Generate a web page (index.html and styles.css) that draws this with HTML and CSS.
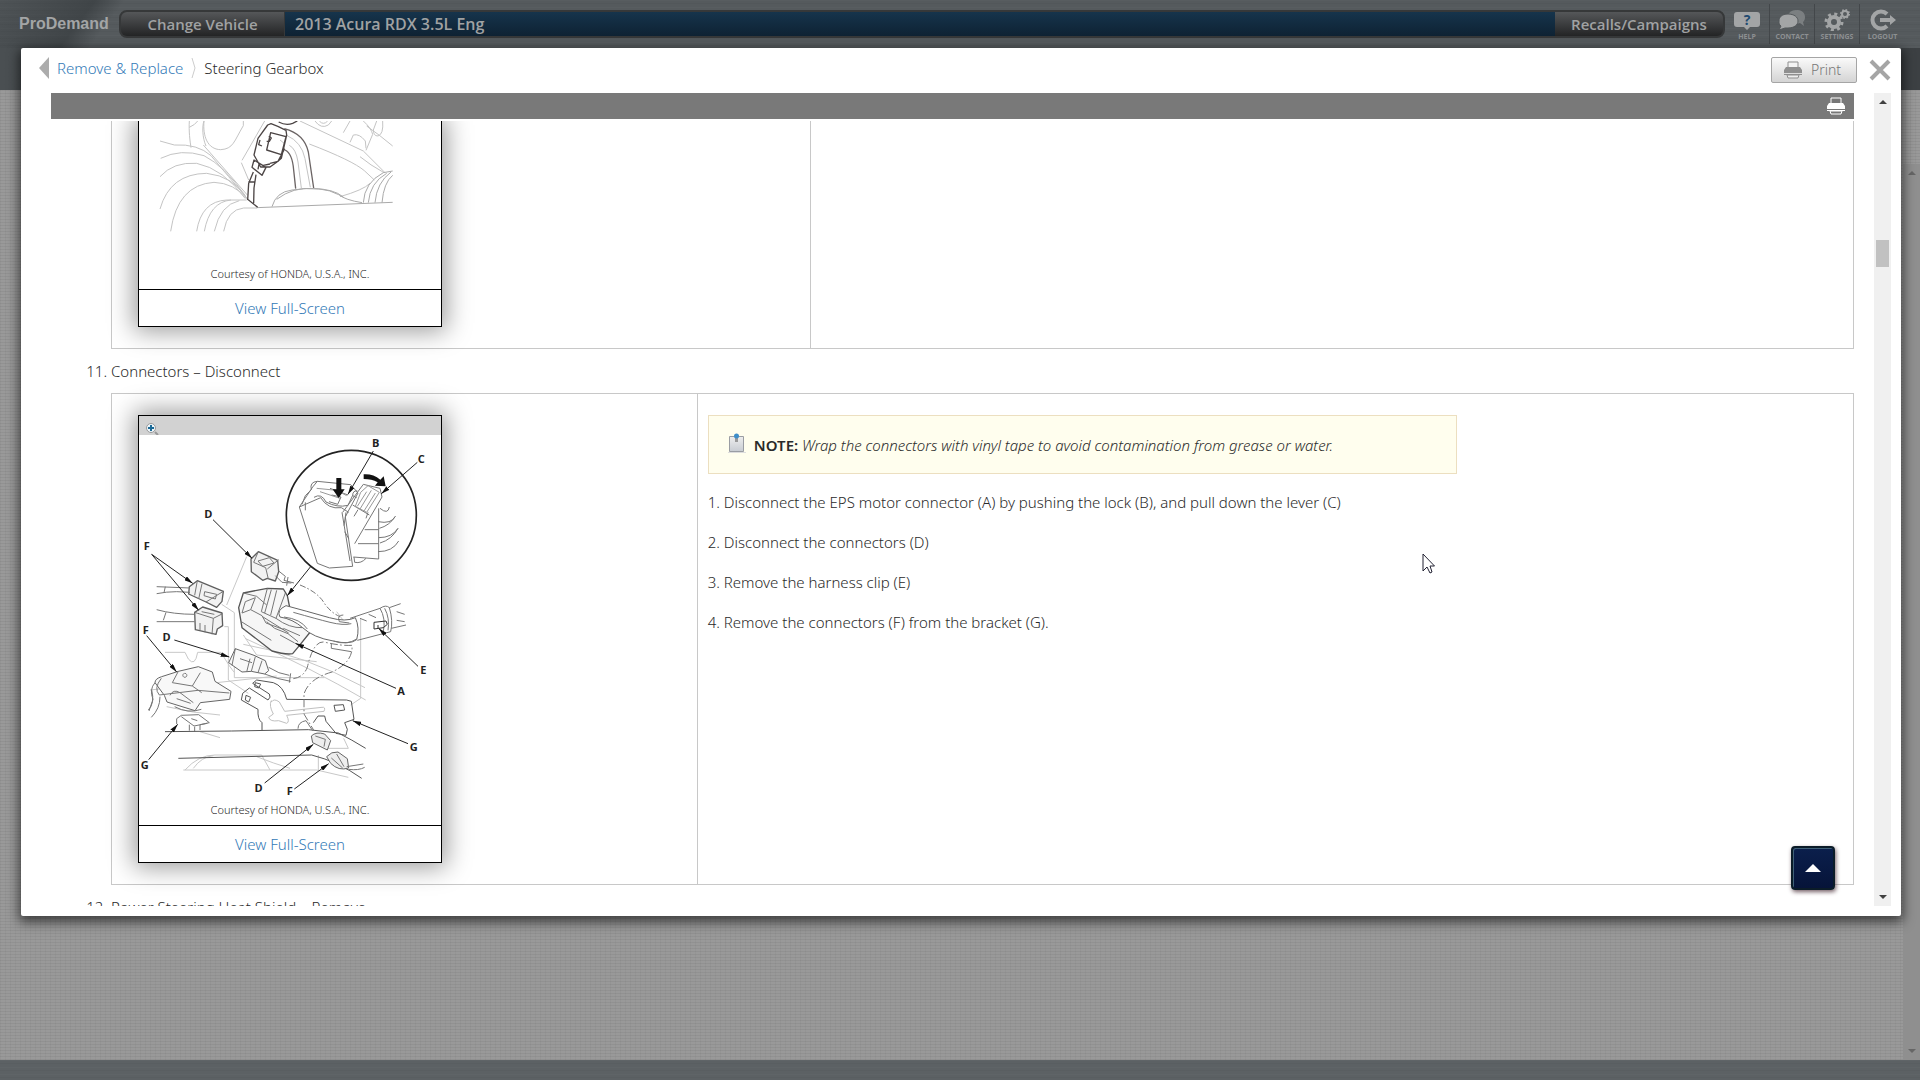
FILE: index.html
```html
<!DOCTYPE html>
<html lang="en">
<head>
<meta charset="utf-8">
<title>ProDemand - Steering Gearbox</title>
<link rel="stylesheet" href="styles.css">
</head>
<body>
<div class="app">
  <header class="topbar">
    <div class="logo">ProDemand</div>
    <div class="vehicle-bar">
      <button class="pill pill-left" type="button">Change Vehicle</button>
      <div class="vehicle">2013 Acura RDX 3.5L Eng</div>
      <button class="pill pill-right" type="button">Recalls/Campaigns</button>
    </div>
    <nav class="tools">
      <a class="tool" href="#help">
        <svg width="28" height="22" viewBox="0 0 28 22"><path d="M4 3h20q3 0 3 3v9q0 3-3 3h-7l-3 3-3-3H4q-3 0-3-3V6q0-3 3-3z" fill="#a3a5a6"/><text x="14" y="16" text-anchor="middle" class="help-mark">?</text></svg>
        <span>HELP</span>
      </a>
      <a class="tool" href="#contact">
        <svg width="28" height="22" viewBox="0 0 28 22"><path d="M19 1c5 0 8 3 8 7 0 3-1 4-2 5l1 4-4-3-4 1z" fill="#7b7f81"/><ellipse cx="18" cy="7" rx="8" ry="6" fill="#7b7f81"/><path d="M10 5c6 0 10 3 10 7s-4 7-10 7l-3 0-6 2 2-4c-2-1-2-3-2-5 0-4 3-7 9-7z" fill="#a3a5a6" stroke="#53585b"/></svg>
        <span>CONTACT</span>
      </a>
      <a class="tool" href="#settings">
        <svg width="28" height="22" viewBox="0 0 28 22" fill="none" stroke="#a3a5a6"><circle cx="11" cy="13" r="5" stroke-width="4"/><circle cx="11" cy="13" r="8" stroke-width="3" stroke-dasharray="3 3.28"/><circle cx="22" cy="5" r="3" stroke-width="2"/><circle cx="22" cy="5" r="4" stroke-width="2" stroke-dasharray="1.5 1.64"/></svg>
        <span>SETTINGS</span>
      </a>
      <a class="tool" href="#logout">
        <svg width="28" height="22" viewBox="0 0 28 22"><path d="M18 5a8.500 8.500 0 1 0 0 12" fill="none" stroke="#a3a5a6" stroke-width="4"/><path d="M11 9h10V6l6 5-6 5v-3H11z" fill="#a3a5a6"/></svg>
        <span>LOGOUT</span>
      </a>
    </nav>
  </header>
  <div class="subbar"></div>
  <main class="desk">
    <div class="page-scroll"><i class="arrow-up"></i><i class="arrow-down"></i></div>
  </main>
  <footer class="bottombar"></footer>
</div>

<section class="dialog" aria-label="Steering Gearbox">
  <header class="dialog-head">
    <nav class="crumbs">
      <button class="back" type="button" aria-label="Back"><svg width="10" height="22" viewBox="0 0 10 22"><path d="M10 0v22L0 11z" fill="#acacac"/></svg></button>
      <a href="#remove">Remove &amp; Replace</a>
      <svg width="5" height="20" viewBox="0 0 5 20"><path d="M1 0l3 10-3 10" fill="none" stroke="#ccc"/></svg>
      <span>Steering Gearbox</span>
    </nav>
    <button class="print" type="button">
      <svg width="20" height="18" viewBox="0 0 20 18"><path d="M5 7V1h10v6" fill="#f3f3f3" stroke="#8f8f8f"/><path d="M3 6h14l2 3v5H1V9z" fill="#8f8f8f"/><path d="M1 12.500h18" stroke="#ddd"/><path d="M4 14h12l-1 3H5z" fill="#eee" stroke="#8f8f8f"/></svg>
      <span>Print</span>
    </button>
    <button class="close" type="button" aria-label="Close"><svg width="22" height="22" viewBox="0 0 22 22"><path d="M2 2l18 18M20 2L2 20" stroke="#a5a5a5" stroke-width="4"/></svg></button>
  </header>
  <div class="dialog-body">
    <div class="article">
      <div class="article-bar">
        <button type="button" aria-label="Print article"><svg width="20" height="18" viewBox="0 0 20 18"><path d="M5 7V1h10v6" fill="#777" stroke="#fff"/><path d="M3 6h14l2 3v5H1V9z" fill="#fff"/><path d="M1 12.500h18" stroke="#777"/><path d="M4 14h12l-1 3H5z" fill="#777" stroke="#fff"/></svg></button>
      </div>
      <div class="article-scroll">
        <ol class="steps" start="10">
          <li class="continued">
            <table class="step-table first">
              <tr>
                <td class="pic-cell wide">
                  <figure class="thumb">
                    <svg class="drawing" viewBox="117 33 906 429" fill="none" stroke="#c4c4c4" stroke-width="3">
                      <path d="M268 33c-2 30 2 60 5 80M312 33c-4 45 10 85 50 86 38-2 40-25 68-72V33M312 33c-6 15-5 50 6 75M268 52q18-8 25-19M494 33l-68 118M424 158l22 52M600 33l190 90 65 65M628 102q130 50 165 80l30 28M645 33q18 25 40 12l10-12M658 33q12 14 25 0M750 33l-20 35M790 33q24 22 28 40l-20 48M848 33q3 40-14 45-14 0-14-18l10-27M750 97l10-22q18-5 36 18l2 22M800 48q40 28 78 60M780 140q30 25 72 48M720 260q70-20 90-40"/>
                      <path d="M180 93l43 12q70-4 110 32 50 60 110 130M182 145q60-30 130-8 60 30 124 120M180 200q40-45 110-40 80 16 146 106M180 297q30-106 140-107 80 8 120 75M212 364q20-140 130-147 60 2 100 50M290 364q14-90 90-94h60M313 364q16-88 80-94M343 364q18-80 75-92M371 364q12-66 60-70h40M310 105l132 150"/>
                      <path d="M516 290q12-44 60-50 90-14 140 14 20 16 70 24M530 268q50-38 110-32 60 0 90 25M470 293l408-16M790 278q3-60 60-90l28-5M805 278q5-60 55-88M825 278q5-60 48-92M846 278q5-60 32-82" stroke="#aaa"/>
                      <path d="M553 56q60 16 72 70l16 108M555 120q22 10 26 60l6 56" stroke="#6b6464" stroke-width="4"/>
                      <path d="M540 90l15 12M568 106q20 10 26 50l10 78M560 76q45 20 55 70l16 86"/>
                      <g stroke="#4c4545" stroke-width="4"><path d="M503 45l10-4q22 8 45 20l2 14-16 70-12 10-22 16-28 0-20-36 12-50zM512 68l46 12-14 54-44-14zM506 80q6 0 8 4l-6 10h-8M480 90l-4 14 10 4M462 150l-6 22 30 24 12-24zM478 158l-4 20M460 186l-14 34-3 50M468 194l-6 40-1 46M445 216h18M510 160l24-6 20-38M490 166l20-4M443 268l30 24M536 36q22 12 42 4l14-7"/></g>
                    </svg>
                    <figcaption>Courtesy of HONDA, U.S.A., INC.</figcaption>
                    <a class="full" href="#figure10">View Full-Screen</a>
                  </figure>
                </td>
                <td></td>
              </tr>
            </table>
          </li>
          <li><div class="step-title">Connectors – Disconnect</div>
            <table class="step-table">
              <tr>
                <td class="pic-cell">
                  <figure class="thumb">
                    <div class="thumb-bar"><svg width="14" height="12" viewBox="0 0 14 12"><path d="M9 9l3 3" stroke="#999" stroke-width="2"/><circle cx="5" cy="5" r="4.500" fill="#eef6fb" stroke="#9a9a9a"/><path d="M5 2v6M2 5h6" stroke="#1c6a96" stroke-width="2"/></svg></div>
                    <svg class="drawing" viewBox="27 90 906 1095" fill="none" stroke="#777" stroke-width="3">
                      <defs><marker id="tip" viewBox="0 0 26 14" refX="26" refY="7" markerWidth="26" markerHeight="14" markerUnits="userSpaceOnUse" orient="auto"><path d="M0 0l26 7-26 7z" fill="#111" stroke="none"/></marker></defs>
                      <g stroke="#c8c8c8">
                        <path d="M350 455l-60 145M275 598l38 25v195h270M283 665h12v160l60 40M340 690l40 60 180 20M105 742h60l10 20q20 25 28-20h70q30 50 40 60M340 718q180 30 365 130M345 700q200 90 362 185M692 640v240l-30 20M620 620l60 80M60 855l380-42M160 1095h400l95 22M165 1095q40-45 90-45h140l25 45M190 1090q25-35 60-38M380 1055q50 20 100 35M565 1050v45M110 905q80 20 160 25M210 980l60 18M590 1030h65l-14-30M347 680h30l30 40"/>
                      </g>
                      <!-- connector enlarged in the circle -->
                      <circle cx="664" cy="331" r="195" stroke="#222" stroke-width="5"/>
                      <path d="M508 306l40-60 14-17 100 10 22 25-30 56-8 16 22 148-70 5-36-14zM508 306l64-28q22 36 62 30l22 14M562 229q-24 2-18 25l-18 18-10 26M526 292v24M552 277q22-14 36 14 34 18 66 10l14-30M600 250l54 20M605 270l28 6-10 22-26-8M636 322l24 146M648 322l-6 40M644 380l12 20M682 258q-14-2-14 14l12 6M700 238l50 12 6 26-82 140M700 238l-62 84M668 300l50 30M684 314l-12 20M714 322l-6 18M746 310v152l-76-6M704 374h42M684 416h62M672 456l2 16q20 4 34-12"/>
                      <path d="M692 262l22-20 34 20-38 60-34-18zM710 260l-28 44M724 256l-34 56M736 264l-34 54M560 250l60 6 30 16M570 260l60 20" stroke="#999"/>
                      <path d="M750 310q24 20 28-4M744 350q40 8 52-16M748 370q30-8 48-36M746 398q40 0 58-28M750 414q35-10 54-44M744 440q44 0 62-32" />
                      <path d="M619 219h15v34h10l-18 26-18-26h11z" fill="#111" stroke="none"/>
                      <path d="M701 208q28-2 50 16l10-10 6 30-32-2 8-10q-18-10-42-10z" fill="#111" stroke="none"/>
                      <!-- upper connectors -->
                      <g fill="#f2f2f2" stroke="#5f5f5f" stroke-width="4">
                        <path d="M363 462l22-22 58 26 3 34-10 28-24-8-14 6-34-26z"/>
                        <path d="M178 545l24-18 78 32-4 30-16 18-32-16-52-24z"/>
                        <path d="M194 622l24-16 58 18 2 38-16 10-4 16-62-14z"/>
                      </g>
                      <path d="M385 440l-14 32 36 16 8 34M446 464l-34 28M384 468l34-10 14 16-34 10zM446 498l20 16-4 12 30 8M436 512l20 20 28 2M474 516l-4 26"/>
                      <path d="M202 527l-8 44M216 536l-10 46M280 559l-52 32M224 560l36 8-4 14-34-10zM80 545l100 4M80 566q30-6 60-6l40 2M106 545l-4 18"/>
                      <path d="M194 622l56 18 28-14M250 640l-4 48M210 654v22M225 660v22M215 620l38 8M80 614q50 14 114 14M80 650h114M108 622l-8 24"/>
                      <path d="M510 540q50 20 70 50 20 32 50 45" stroke-dasharray="18 6 5 6"/>
                      <!-- main EPS connector and hose -->
                      <path d="M326 608l14-44 72-14 48 2 12 20 8 40 50 40 18 20-40 50-20 24q-20 4-62-8l-90-70z" fill="#f6f6f6" stroke="#555" stroke-width="4"/>
                      <path d="M468 602q60 16 130 36 50 14 78 0 14 30 4 66-20 16-70 4-60-10-92-40-30-26-68-32-12-20 18-34z" fill="#fff" stroke="#666"/>
                      <path d="M346 590l30-12-14 36-26 10zM340 564l40 10 30 26M412 550l-18 70 44 20 28-76M424 554l-20 70M440 556l-18 74M362 614l34 18 12 22 54 20M462 636q50 6 70 36M438 640q40 30 80 28M396 634l80 50M334 650l90 56M410 650l24 20 40 16 30 24M460 670l50 22M450 690l44 24M490 622q70 20 110 30 40 10 64 4M660 640l90-30q18-12 28-2 12 40 4 72l-100 26M750 610q18 30 10 70M778 608l34-12M784 670l44-10M764 610q16 30 10 66M640 630q-20 0-12 20l30 4M610 708q40 14 70-6M604 716v14l60 10M690 640l20 8M716 628l22 10M800 620l24 8M800 646l24 4" />
                      <path d="M732 652l36-4 4 10-12 10-28 4zM744 660v10" stroke="#333"/>
                      <g transform="translate(0 675)">
                        <path d="M296 98l20-42 56 20 34 16 10 30-12 10-40-8-28 2zM75 158q0-12 20-18l50-16 60-14 42 16 8 28 48 30-4 24-88 10-16 24-84-26-8-20z" fill="#f8f8f8" stroke="#666"/>
                        <path d="M316 56l-10 50M330 86l36 12M360 86l-10 40M376 80l-12 44M396 92l-12 36M404 132q40 16 78 22M416 112q30 20 62 24M482 130l-4 28"/>
                        <path d="M94 145q-24 30-6 50l116-14 94 8M145 124l-18 34 60 10 24-40M187 168l28 20M120 196q10-20 30-8l40 30M140 206l42 14M164 130a6 6 0 1 0 1 0M75 158q-18 20-6 50l-12 35M65 180q10 40-10 60M90 200q0 36-26 62M134 230q40 22 80 8"/>
                        <path d="M140 282v-16l14-10 52-2 32 24-28 6v16M154 260l38 28 40-8M178 284v18M194 290v14M184 266l18 6"/>
                        <path d="M338 190l20-16 56 36q10-8 4-18l-50-32 12-10 50 8q30 10 40 50l180 2 14 4 8 54-28 10 8 20-4 18-30-6-30-36-4-16h-20l-14 20M338 190l-4 20 50 28q-2 30 12 40v22M348 196l14 6-6 14-10-6zM376 158l16 4-6 12-12-4zM612 226l28-2 4 16-28 4z" stroke="#555"/>
                        <path d="M424 212q-8 14 6 40l-14 10q4 14 30 10l24 8q10-4 0-24l112-12q6-14-6-12l-112 12-16-28q-16-12-24 0z" stroke="#c0c0c0"/>
                        <path d="M105 305l200-2 230-4 90 10q40 20 82 46M145 385l400-10q80 20 150 70" stroke="#555"/>
                        <path d="M544 318q14-14 40-6l18 20-10 28-44-22zM590 380q14-16 34-14l28 20 4 28q-30 10-54-14z" fill="#eee" stroke="#666"/>
                        <path d="M504 296q0-20 24-24l20 30M556 318l30 10-4 22M604 384l34 30M620 372l22 38M650 410l50-8M656 418q30 4 48-6"/>
                        <path d="M490 146q30-4 42-34 18-80 50-76 50 12 84 10 4 50-60 80-70 20-84 66v60l30 50" stroke-dasharray="24 7 5 7"/>
                      </g>
                      <g stroke="#222">
                        <path d="M730 138L654 268" marker-end="url(#tip)"/><path d="M862 172L754 266" marker-end="url(#tip)"/><path d="M249 344L366 460" marker-end="url(#tip)"/><path d="M65 448L188 535" marker-end="url(#tip)"/><path d="M65 448L206 616" marker-end="url(#tip)"/><path d="M864 784L746 670" marker-end="url(#tip)"/><path d="M541 486L472 572" marker-end="url(#tip)"/>
                        <path d="M50 692L140 801" marker-end="url(#tip)"/><path d="M133 705L298 756" marker-end="url(#tip)"/><path d="M798 850L496 715" marker-end="url(#tip)"/><path d="M834 1016L668 947" marker-end="url(#tip)"/><path d="M56 1064L143 958" marker-end="url(#tip)"/><path d="M404 1134L550 1018" marker-end="url(#tip)"/><path d="M493 1152L596 1076" marker-end="url(#tip)"/>
                      </g>
                      <g class="callouts">
                        <text x="737" y="126">B</text><text x="874" y="175">C</text><text x="235" y="340">D</text><text x="50" y="435">F</text><text x="47" y="686">F</text><text x="110" y="709">D</text><text x="880" y="807">E</text><text x="813" y="869">A</text><text x="851" y="1038">G</text><text x="44" y="1093">G</text><text x="386" y="1162">D</text><text x="479" y="1170">F</text>
                      </g>
                    </svg>
                    <figcaption>Courtesy of HONDA, U.S.A., INC.</figcaption>
                    <a class="full" href="#figure11">View Full-Screen</a>
                  </figure>
                </td>
                <td class="text-cell">
                  <div class="note">
                    <svg width="18" height="20" viewBox="0 0 18 20"><defs><linearGradient id="paper" x2="0" y2="1"><stop stop-color="#eee"/><stop offset="1" stop-color="#c8ccd2"/></linearGradient></defs><path d="M0 19.500h18" stroke="#ddd"/><path d="M1.500 3.500h14v15h-14z" fill="url(#paper)" stroke="#9a9da3"/><path d="M8.500 5v4" stroke="#999" stroke-width="3"/><circle cx="8.500" cy="3" r="2.500" fill="#3e8ec9"/></svg>
                    <p><strong>NOTE:</strong> <em>Wrap the connectors with vinyl tape to avoid contamination from grease or water.</em></p>
                  </div>
                  <ol class="substeps">
                    <li>Disconnect the EPS motor connector (A) by pushing the lock (B), and pull down the lever (C)</li>
                    <li>Disconnect the connectors (D)</li>
                    <li>Remove the harness clip (E)</li>
                    <li>Remove the connectors (F) from the bracket (G).</li>
                  </ol>
                </td>
              </tr>
            </table>
          </li>
          <li><div class="step-title">Power Steering Heat Shield – Remove</div></li>
        </ol>
      </div>
    </div>
    <div class="scrollbar"><i class="arrow-up"></i><i class="thumb-grip"></i><i class="arrow-down"></i></div>
  </div>
  <button class="to-top" type="button" aria-label="Back to top"><svg width="16" height="8" viewBox="0 0 16 8"><path d="M8 0l8 8H0z" fill="#fff"/></svg></button>
</section>
<svg class="cursor" width="13" height="21" viewBox="0 0 13 21"><path d="M1 1v17l4-4 3 6 2-1-2-6h4.500z" fill="#fff" stroke="#223"/></svg>
</body>
</html>
```
FILE: styles.css
```css
* { box-sizing: border-box; }
body {
  margin: 0;
  font: 360 15px/20px "Noto Sans", "Open Sans", sans-serif;
  color: #2a2a2a;
  background: #949494;
}
button { font: inherit; padding: 0; border: 0; background: none; color: inherit; }
a { color: #337ab7; text-decoration: none; }
svg { display: block; flex: none; }

/* page behind the dialog */
.app { display: flex; flex-direction: column; height: 100vh; }
.topbar, .bottombar {
  background:
    repeating-linear-gradient(180deg, rgba(255,255,255,.02) 0 1px, transparent 1px 3px, rgba(0,0,0,.03) 3px 4px, transparent 4px 7px),
    #5c6164;
}
.topbar {
  display: flex;
  align-items: center;
  height: 48px;
  flex: none;
  padding: 0 15px 1px 19px;
  background:
    linear-gradient(127deg, rgba(50,55,58,.2) 0, rgba(50,55,58,.6) 76px, transparent 100px),
    repeating-linear-gradient(180deg, rgba(255,255,255,.02) 0 1px, transparent 1px 3px, rgba(0,0,0,.03) 3px 4px, transparent 4px 7px),
    #555a5d;
}
.logo { width: 100px; font: bold 16px/20px "Liberation Sans", sans-serif; color: #a3a5a6; }
.vehicle-bar {
  flex: 1;
  display: flex;
  height: 28px;
  border: 2px solid #363839;
  border-radius: 8px;
  background: #363839;
  font-weight: 600;
  font-family: "Open Sans", sans-serif;
  color: #a0a2a3;
}
.pill { background: linear-gradient(#555759, #232425); }
.pill-left { width: 163px; border-radius: 6px 0 0 6px; }
.pill-right { width: 168px; border-radius: 0 6px 6px 0; }
.vehicle {
  flex: 1;
  margin-left: 1px;
  padding: 2px 10px;
  background: linear-gradient(#16344c, #0e2233);
  font-size: 16px;
}
.tools { display: flex; }
.tool {
  display: flex;
  flex-direction: column;
  align-items: center;
  gap: 2px;
  width: 45px;
  height: 40px;
  padding-top: 5px;
  border-right: 1px solid #43474a;
  color: #8d9092;
  font: bold 7px/8px "Open Sans", sans-serif;
}
.tool:last-child { border: 0; }
.help-mark { font: bold 14px "Open Sans", sans-serif; fill: #1f4a70; }
.subbar { height: 42px; flex: none; background: linear-gradient(90deg, #4a4f52, #3c4043); }
.desk {
  flex: 1;
  display: flex;
  justify-content: flex-end;
  padding-top: 74px;
  background:
    repeating-linear-gradient(180deg, rgba(0,0,0,.05) 0 1px, transparent 1px 3px),
    repeating-linear-gradient(90deg, rgba(0,0,0,.03) 0 1px, transparent 1px 5px),
    #999;
}
.page-scroll, .scrollbar {
  display: flex;
  flex-direction: column;
  align-items: center;
  width: 17px;
  padding: 7px 0;
  background: #8f8f8f;
}
.arrow-up, .arrow-down { border: 4px solid transparent; }
.arrow-up { border-top: 0; border-bottom-color: #404040; }
.arrow-down { border-bottom: 0; border-top-color: #404040; margin-top: auto; }
.page-scroll .arrow-up { border-bottom-color: #666; }
.page-scroll .arrow-down { border-top-color: #666; }
.bottombar { height: 20px; flex: none; }

/* dialog */
.dialog {
  position: absolute;
  inset: 48px 19px 164px 21px;
  display: flex;
  flex-direction: column;
  padding-bottom: 10px;
  border-radius: 2px;
  background: #fff;
  box-shadow: 0 4px 12px 2px rgba(0,0,0,.6);
}
.dialog-head {
  display: flex;
  align-items: center;
  height: 45px;
  flex: none;
  padding: 0 10px 2px 18px;
}
.crumbs { flex: 1; display: flex; align-items: center; gap: 8px; padding-bottom: 3px; }
.print {
  display: flex;
  align-items: center;
  gap: 8px;
  width: 86px;
  height: 26px;
  padding-left: 11px;
  border: 1px solid #a5a5a5;
  border-radius: 2px;
  background: linear-gradient(#fafafa, #d4d4d4);
  color: #777;
  font-size: 14px;
}
.close { margin-left: 12px; }
.dialog-body { flex: 1; min-height: 0; display: flex; gap: 20px; padding: 0 10px 0 30px; }
.article { flex: 1; display: flex; flex-direction: column; gap: 2px; }
.article-bar {
  display: flex;
  align-items: center;
  justify-content: flex-end;
  height: 26px;
  flex: none;
  padding-right: 8px;
  background: #797979;
}
.article-scroll { flex: 1; min-height: 0; overflow: hidden; }
.scrollbar { background: #f0f0f0; }
.thumb-grip { width: 13px; height: 27px; margin-top: 136px; background: #c1c1c1; }

.steps { margin: 0; padding-left: 60px; }
.continued { list-style: none; }
.step-title { padding: 12px 0; }
.step-table { width: 100%; border-spacing: 0; border: 1px solid #c8c8c8; table-layout: fixed; }
.step-table.first { border-top: 0; }
.step-table td { padding: 0; vertical-align: top; }
.step-table .pic-cell { width: 33.65%; padding: 21px 26px; border-right: 1px solid #c8c8c8; }
.step-table .wide { width: 40.15%; }
.step-table.first .pic-cell { padding-top: 0; }
.step-table .text-cell { padding: 21px 10px; }

.thumb {
  width: 304px;
  margin: 0;
  border: 1px solid #000;
  background: #fff;
  box-shadow: 0 0 24px 4px rgba(0,0,0,.4);
}
.first .thumb { border-top: 0; }
.thumb-bar { height: 19px; padding: 7px 7px 0; background: #d2d2d2; }
.drawing { width: 100%; stroke-linejoin: round; }
.callouts { font: bold 33px "Open Sans", sans-serif; fill: #222; stroke: none; text-anchor: middle; }
figcaption { height: 25px; font-size: 11px; font-weight: 300; line-height: 20px; text-align: center; }
.full { display: block; height: 37px; border-top: 1px solid #000; line-height: 37px; text-align: center; }

.note {
  display: flex;
  align-items: center;
  gap: 8px;
  width: 66%;
  height: 59px;
  padding-left: 19px;
  border: 1px solid #ecdfc0;
  background: #fffeee;
}
.note p { margin: 0; }
.note strong { font-weight: 600; }
.note svg { margin-bottom: 3px; }
.substeps { margin: 18px 0 0; padding-left: 16px; display: flex; flex-direction: column; gap: 20px; }

.to-top {
  position: absolute;
  right: 66px;
  bottom: 26px;
  display: flex;
  align-items: center;
  justify-content: center;
  width: 44px;
  height: 44px;
  border: 2px solid #0b1c28;
  border-radius: 4px;
  background: linear-gradient(#0b1f4c, #061439);
  box-shadow: inset 1px 1px 0 #3f6078, 1px 2px 4px rgba(60,30,40,.7);
}
.cursor { position: absolute; left: 1422px; top: 553px; }
```
